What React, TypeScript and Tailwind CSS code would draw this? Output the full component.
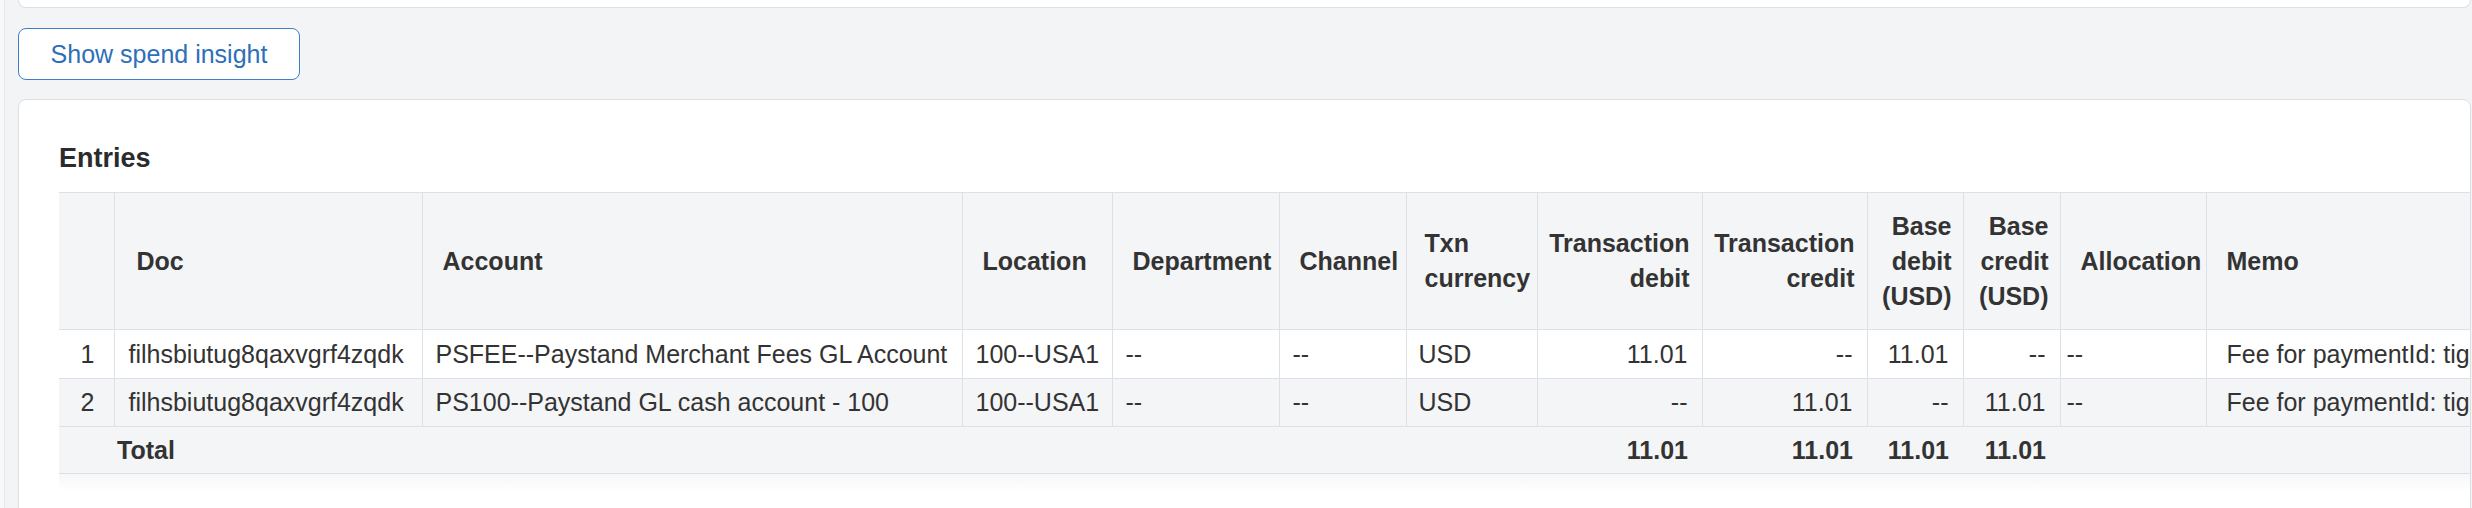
import React from 'react';

type Row = {
  no: string;
  doc: string;
  account: string;
  location: string;
  department: string;
  channel: string;
  currency: string;
  txnDebit: string;
  txnCredit: string;
  baseDebit: string;
  baseCredit: string;
  allocation: string;
  memo: string;
};

const rows: Row[] = [
  {
    no: '1',
    doc: 'filhsbiutug8qaxvgrf4zqdk',
    account: 'PSFEE--Paystand Merchant Fees GL Account',
    location: '100--USA1',
    department: '--',
    channel: '--',
    currency: 'USD',
    txnDebit: '11.01',
    txnCredit: '--',
    baseDebit: '11.01',
    baseCredit: '--',
    allocation: '--',
    memo: 'Fee for paymentId: tigq8xzv2kd7lmw0',
  },
  {
    no: '2',
    doc: 'filhsbiutug8qaxvgrf4zqdk',
    account: 'PS100--Paystand GL cash account - 100',
    location: '100--USA1',
    department: '--',
    channel: '--',
    currency: 'USD',
    txnDebit: '--',
    txnCredit: '11.01',
    baseDebit: '--',
    baseCredit: '11.01',
    allocation: '--',
    memo: 'Fee for paymentId: tigq8xzv2kd7lmw0',
  },
];

const colWidths = [55, 308, 540, 150, 167, 127, 131, 165, 165, 96, 97, 146, 560];

const th = 'border-r border-[#dde1e5] align-middle font-bold text-[#333] whitespace-nowrap';
const td = 'border-r border-[#dde1e5] align-middle whitespace-nowrap';

export default function App() {
  return (
    <div
      className="min-h-[508px] w-[2472px] overflow-hidden bg-[#f2f4f6] text-[25px] leading-[36px] text-[#333]"
      style={{ fontFamily: '"Liberation Sans", Arial, Helvetica, sans-serif' }}
    >
      <div className="flex">
        {/* left rail */}
        <div className="w-[5px] shrink-0 self-stretch bg-[#f7f8f9] border-r border-[#e6e8eb]" />

        <div className="flex-1 min-w-0 pl-[13px] pr-[1px]">
          {/* Previous card, only its bottom edge shows */}
          <div className="h-[8px] bg-white border-x border-b border-[#dcdfe3] rounded-b-lg" />

          <button className="mt-[20px] h-[52px] w-[282px] rounded-[8px] border border-[#3f7ec8] bg-white text-[25px] text-[#2e6fb8]">
            Show spend insight
          </button>

          {/* Entries card */}
          <div className="mt-[19px] bg-white border border-[#dcdfe3] rounded-lg overflow-hidden pt-[40px] pl-[40px] h-[420px]">
            <h2 className="text-[27px] leading-[36px] font-bold text-[#2b2b2b]">Entries</h2>

            <div className="mt-[16px]">
              <table className="table-fixed border-collapse" style={{ width: colWidths.reduce((a, b) => a + b, 0) }}>
                <colgroup>
                  {colWidths.map((w, i) => (
                    <col key={i} style={{ width: w }} />
                  ))}
                </colgroup>
                <thead>
                  <tr className="h-[137px] bg-[#f3f5f7] border-y border-[#dde1e5] leading-[35px]">
                    <th className={th}></th>
                    <th className={`${th} text-left pl-[22px]`}>Doc</th>
                    <th className={`${th} text-left pl-[20px]`}>Account</th>
                    <th className={`${th} text-left pl-[20px]`}>Location</th>
                    <th className={`${th} text-left pl-[20px]`}>Department</th>
                    <th className={`${th} text-left pl-[20px]`}>Channel</th>
                    <th className={`${th} text-left pl-[18px]`}>
                      Txn
                      <br />
                      currency
                    </th>
                    <th className={`${th} text-right pr-[12px]`}>
                      Transaction
                      <br />
                      debit
                    </th>
                    <th className={`${th} text-right pr-[12px]`}>
                      Transaction
                      <br />
                      credit
                    </th>
                    <th className={`${th} text-right pr-[11px]`}>
                      Base
                      <br />
                      debit
                      <br />
                      (USD)
                    </th>
                    <th className={`${th} text-right pr-[11px]`}>
                      Base
                      <br />
                      credit
                      <br />
                      (USD)
                    </th>
                    <th className={`${th} text-left pl-[20px]`}>Allocation</th>
                    <th className={`${th} text-left pl-[20px] border-r-0`}>Memo</th>
                  </tr>
                </thead>
                <tbody>
                  {rows.map((r, i) => (
                    <tr
                      key={r.no}
                      className={`h-[48.5px] border-b border-[#dde1e5] ${i % 2 === 1 ? 'bg-[#f4f5f7]' : 'bg-white'}`}
                    >
                      <td className={`${td} text-right pr-[19px]`}>{r.no}</td>
                      <td className={`${td} pl-[14px]`}>{r.doc}</td>
                      <td className={`${td} pl-[13px]`}>{r.account}</td>
                      <td className={`${td} pl-[13px]`}>{r.location}</td>
                      <td className={`${td} pl-[13px]`}>{r.department}</td>
                      <td className={`${td} pl-[13px]`}>{r.channel}</td>
                      <td className={`${td} pl-[12px]`}>{r.currency}</td>
                      <td className={`${td} text-right pr-[14px]`}>{r.txnDebit}</td>
                      <td className={`${td} text-right pr-[14px]`}>{r.txnCredit}</td>
                      <td className={`${td} text-right pr-[14px]`}>{r.baseDebit}</td>
                      <td className={`${td} text-right pr-[14px]`}>{r.baseCredit}</td>
                      <td className={`${td} pl-[6px]`}>{r.allocation}</td>
                      <td className={`${td} pl-[20px] border-r-0`}>{r.memo}</td>
                    </tr>
                  ))}
                  <tr className="h-[47px] bg-[#f3f5f7] border-b border-[#dde1e5] font-bold">
                    <td></td>
                    <td className="pl-[3px]">Total</td>
                    <td></td>
                    <td></td>
                    <td></td>
                    <td></td>
                    <td></td>
                    <td className="text-right pr-[14px]">11.01</td>
                    <td className="text-right pr-[14px]">11.01</td>
                    <td className="text-right pr-[14px]">11.01</td>
                    <td className="text-right pr-[14px]">11.01</td>
                    <td></td>
                    <td></td>
                  </tr>
                </tbody>
              </table>
              <div className="h-[18px] bg-gradient-to-b from-[#f6f7f9] to-white" />
            </div>
          </div>
        </div>
      </div>
    </div>
  );
}
